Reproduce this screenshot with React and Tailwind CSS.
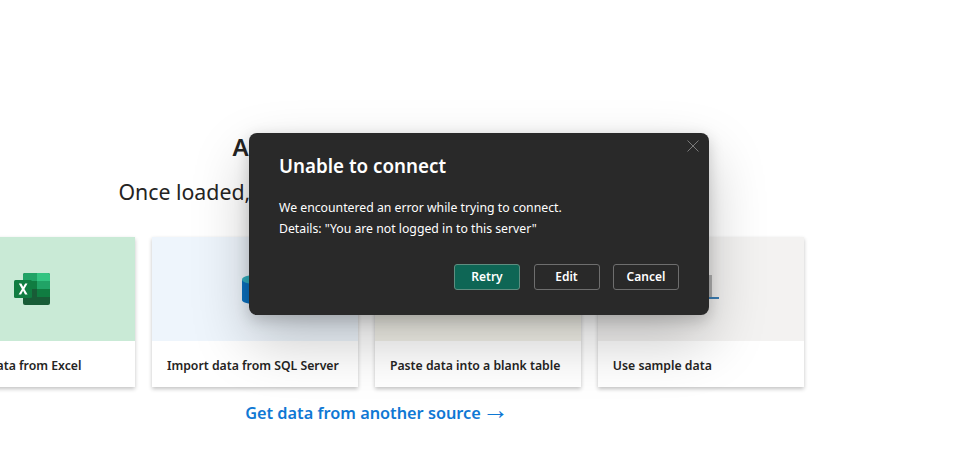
function ExcelIcon() {
    return (
        <svg width="36" height="32" viewBox="0 0 36 32">
            <rect x="9" y="0" width="27" height="32" rx="2" fill="#185c37" />
            <path d="M9 2a2 2 0 0 1 2-2h12v8H9z" fill="#21a366" />
            <path d="M23 0h11a2 2 0 0 1 2 2v6H23z" fill="#33c481" />
            <rect x="9" y="8" width="14" height="8" fill="#107c41" />
            <rect x="23" y="8" width="13" height="8" fill="#21a366" />
            <rect x="9" y="16" width="14" height="8" fill="#185c37" />
            <rect x="23" y="16" width="13" height="8" fill="#107c41" />
            <rect x="0" y="7" width="18" height="18" rx="1.5" fill="#107c41" />
            <path
                d="M4.6 21.5 7.9 16 4.8 10.5h2.6l1.8 3.6 1.9-3.6h2.4L10.4 16l3.2 5.5h-2.6l-1.9-3.7-2 3.7z"
                fill="#fff"
            />
        </svg>
    );
}

function SqlIcon() {
    return (
        <svg width="26" height="29" viewBox="0 0 26 29">
            <path d="M0 5v20c0 2 5 4 13 4s13-2 13-4V5z" fill="#0a72c2" />
            <ellipse cx="13" cy="4.5" rx="13" ry="4.5" fill="#32b0c0" />
        </svg>
    );
}

function SampleIcon() {
    return (
        <svg width="36" height="24" viewBox="0 0 36 24">
            <rect x="26" y="0" width="3" height="22" fill="#b3b3b3" />
            <rect x="0" y="22" width="36" height="2" fill="#3f82b8" />
        </svg>
    );
}

function Card({ bg, label, icon, iconClass }) {
    return (
        <div className="flex h-[150px] w-[205.3px] shrink-0 flex-col bg-white shadow-[0_1.5px_4px_rgba(0,0,0,0.24)]">
            <div className={`flex h-[104px] items-center justify-center ${bg} ${iconClass}`}>
                {icon}
            </div>
            <div className="flex flex-1 items-center px-[14.5px] pt-[5px] text-[12.25px] font-semibold whitespace-nowrap text-[#252423]">
                {label}
            </div>
        </div>
    );
}

function DialogButton({ children, primary }) {
    return (
        <button
            className={
                primary
                    ? "h-[26px] w-[66px] rounded-[3px] border border-[#5f8d80] bg-[#0e6655] text-[12px] font-semibold text-white"
                    : "h-[26px] w-[66px] rounded-[3px] border border-[#6e6e6e] bg-transparent text-[12px] font-semibold text-white"
            }
        >
            {children}
        </button>
    );
}

export default function App() {
    return (
        <div className="relative h-[464px] w-[977px] overflow-hidden bg-white font-['Noto_Sans',sans-serif]">
            <div className="flex w-[733px] flex-col items-center pt-[131px]">
                <h1 className="text-[24px] leading-[32px] font-semibold tracking-[-0.35px] whitespace-nowrap text-[#252423]">
                    Add data to your report
                </h1>
                <p className="mt-[15px] ml-[29px] text-[21.3px] leading-[28px] whitespace-nowrap text-[#252423]">
                    Once loaded, your data will appear in the Data pane.
                </p>
                <div className="mt-[31px] -ml-[70.6px] flex gap-[17.7px] self-start">
                    <Card
                        bg="bg-[#c9ead6]"
                        label="Import data from Excel"
                        icon={<ExcelIcon />}
                    />
                    <Card
                        bg="bg-[#eef5fc]"
                        label="Import data from SQL Server"
                        icon={<SqlIcon />}
                    />
                    <Card bg="bg-[#f3f2ea]" label="Paste data into a blank table" />
                    <Card
                        bg="bg-[#f3f2f1]"
                        label="Use sample data"
                        icon={<SampleIcon />}
                        iconClass="pb-[4px]"
                    />
                </div>
                <a className="mt-[14px] ml-[21px] flex h-[24px] items-center gap-[1px] text-[16.3px] leading-[24px] font-semibold whitespace-nowrap text-[#0f78d4]">
                    Get data from another source
                    <span className="-mt-[6px] font-['Liberation_Sans',sans-serif] text-[27px] leading-none font-normal">→</span>
                </a>
            </div>

            <div className="absolute top-[133px] left-[249px] flex h-[182px] w-[460px] flex-col rounded-[8px] bg-[#292929] pt-[20px] pr-[30px] pl-[30px] shadow-[0_25.6px_57.6px_rgba(0,0,0,0.22),0_4.8px_14.4px_rgba(0,0,0,0.18)]">
                <button className="absolute top-[7px] right-[10px] text-[#7a7a7a]">
                    <svg width="12" height="12" viewBox="0 0 12 12" fill="none" stroke="currentColor">
                        <path d="M.5.5l11 11M11.5.5l-11 11" />
                    </svg>
                </button>
                <h2 className="text-[18.8px] leading-[26px] font-semibold text-white">Unable to connect</h2>
                <div className="mt-[18px] text-[12.25px] leading-[21px] text-white">
                    <p>We encountered an error while trying to connect.</p>
                    <p>Details: "You are not logged in to this server"</p>
                </div>
                <div className="mt-[25px] flex justify-end gap-[13.5px]">
                    <DialogButton primary>Retry</DialogButton>
                    <DialogButton>Edit</DialogButton>
                    <DialogButton>Cancel</DialogButton>
                </div>
            </div>
        </div>
    );
}
